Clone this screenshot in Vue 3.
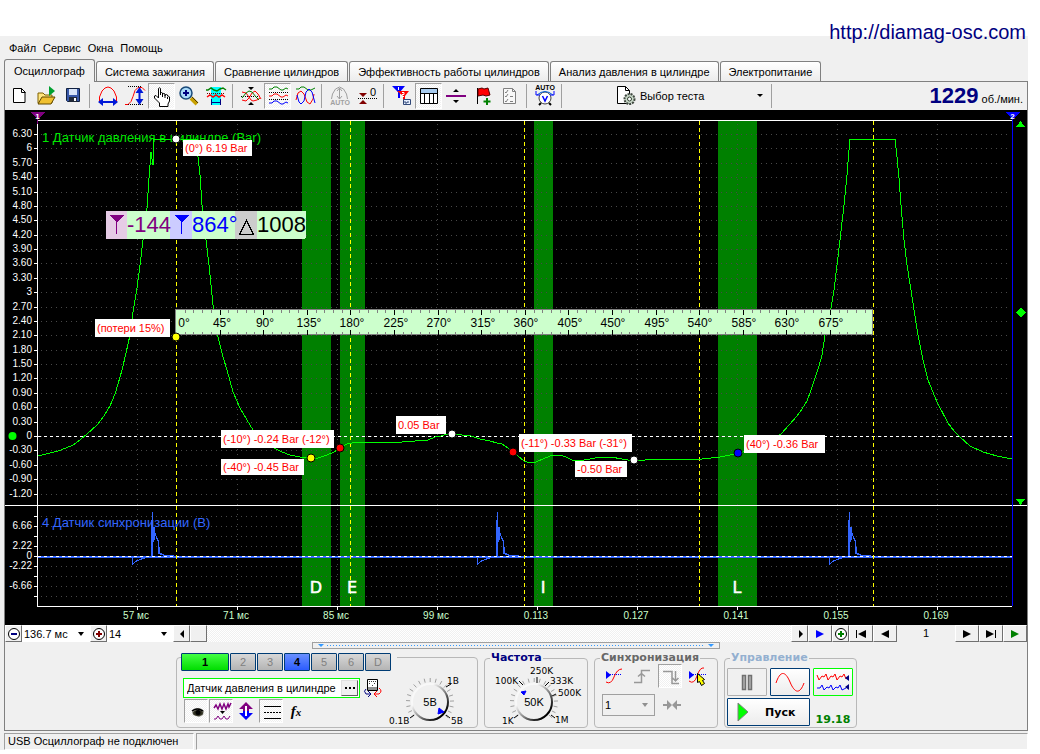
<script setup>
import { ref } from 'vue'

const menus = ['Файл', 'Сервис', 'Окна', 'Помощь']
const tabs = [
  'Осциллограф',
  'Система зажигания',
  'Сравнение цилиндров',
  'Эффективность работы цилиндров',
  'Анализ давления в цилиндре',
  'Электропитание'
]
const activeTab = ref(0)
const channels = ['1', '2', '3', '4', '5', '6', 'D']
const sensor = ref('Датчик давления в цилиндре')

const pressureTicks = Array.from({ length: 26 }, (_, i) => {
  const v = (63 - 3 * i) / 10
  return { y: Math.round(134 + i * 14.38), text: Number.isInteger(v) ? String(v) : v.toFixed(2) }
})
const syncTicks = [516, 526, 536, 546, 556, 566, 576, 586, 596]
const syncLabels = [
  { y: 526, text: '6.66' },
  { y: 546, text: '2.22' },
  { y: 556, text: '0' },
  { y: 566, text: '-2.22' },
  { y: 586, text: '-6.66' }
]
const times = ['57 мс', '71 мс', '85 мс', '99 мс', '0.113', '0.127', '0.141', '0.155', '0.169'].map(
  (text, i) => ({ x: 137 + i * 100, text })
)
const bands = [
  { x: 302, w: 29, letter: 'D', lx: 316 },
  { x: 340, w: 25, letter: 'E', lx: 352 },
  { x: 534, w: 19, letter: 'I', lx: 543 },
  { x: 718, w: 39, letter: 'L', lx: 737 }
]
const strokes = [176, 350, 524, 699, 873]
const rulerTicks = Array.from({ length: 79 }, (_, i) => ({
  x: Math.round(176 + (i + 1) * 8.72),
  major: (i + 1) % 5 === 0
}))
const rulerLabels = Array.from({ length: 16 }, (_, i) => ({
  x: Math.round((i ? 178 : 184) + i * 43.5),
  text: i * 45 + '°'
}))
const pulses = [0, 345, 697]
const notes = [
  { x: 183, y: 140, w: 69, h: 16, text: '(0°) 6.19 Bar' },
  { x: 95, y: 319, w: 75, h: 18, text: '(потери 15%)' },
  { x: 221, y: 430, w: 113, h: 18, text: '(-10°) -0.24 Bar (-12°)' },
  { x: 221, y: 459, w: 83, h: 16, text: '(-40°) -0.45 Bar' },
  { x: 396, y: 416, w: 50, h: 18, text: '0.05 Bar' },
  { x: 519, y: 434, w: 113, h: 18, text: '(-11°) -0.33 Bar (-31°)' },
  { x: 575, y: 461, w: 52, h: 16, text: '-0.50 Bar' },
  { x: 744, y: 435, w: 81, h: 18, text: '(40°) -0.36 Bar' }
]
const dots = [
  { x: 176, y: 139, c: '#fff' },
  { x: 176, y: 337, c: '#ff0' },
  { x: 311, y: 458, c: '#ff0' },
  { x: 340, y: 448, c: '#f00' },
  { x: 452, y: 434, c: '#fff' },
  { x: 513, y: 452, c: '#f00' },
  { x: 634, y: 460, c: '#fff' },
  { x: 738, y: 453, c: '#00f' }
]
const pressure =
  '38,456 50,453 58,451 66,448 73,445 80,440 87,434 97,425 104,416 110,406 115,394 118,384 122,370 126,353 130,335 133,312 137,288 140,265 143,240 147,208 149,178 151,152 153,165 153,139 197,139 198,157 200,175 202,205 206,240 209,265 213,305 218,337 223,357 227,370 233,392 240,408 247,420 253,430 262,438 274,448 282,452 290,455 300,457 311,458 318,458 327,455 334,452 340,448 347,444 352,443 360,442 402,442 415,441 428,440 435,437 441,436 447,434 452,434 462,435 471,436 480,439 490,441 497,443 502,444 508,448 513,452 518,456 524,461 530,463 536,462 545,458 553,455 560,455 566,457 572,460 578,461 584,460 590,459 600,457 611,457 622,459 634,461 645,460 655,459 672,459 690,460 702,459 720,457 730,455 738,453 752,450 768,443 781,434 789,425 797,416 802,409 807,401 811,390 815,378 819,366 822,355 825,335 831,308 834,290 837,265 840,240 844,205 847,175 849,150 850,139 895,139 897,157 899,178 901,205 904,240 907,265 911,290 914,310 918,335 923,360 928,380 937,402 948,423 954,431 960,437 970,446 983,452 997,456 1012,459'

const knobTicks = Array.from({ length: 19 }, (_, i) => {
  const a = ((-220 + i * 14.5) * Math.PI) / 180
  return {
    x1: 45 + Math.cos(a) * 20,
    y1: 46 + Math.sin(a) * 20,
    x2: 45 + Math.cos(a) * 24,
    y2: 46 + Math.sin(a) * 24
  }
})
</script>

<template>
  <div class="page">
    <header class="site"><a href="http://diamag-osc.com">http://diamag-osc.com</a></header>
    <main class="app">
      <nav class="menu">
        <button v-for="m in menus" :key="m" type="button">{{ m }}</button>
      </nav>
      <div class="tabs" role="tablist">
        <button
          v-for="(t, i) in tabs"
          :key="t"
          type="button"
          role="tab"
          :aria-selected="i === activeTab"
          :class="{ active: i === activeTab }"
          @click="activeTab = i"
        >{{ t }}</button>
      </div>

      <section class="body">
        <div class="toolbar">
          <button type="button" class="tool" aria-label="Новый">
            <svg viewBox="0 0 24 24"><path d="M6.500 4.500h8l3.500 3.500v10.500H6.500z" fill="#fff" stroke="#000" /><path d="M14.500 4.500v4h4" fill="none" stroke="#000" /></svg>
          </button>
          <button type="button" class="tool" aria-label="Открыть">
            <svg viewBox="0 0 24 24"><path d="M4 19V9h5l2 2h7v8z" fill="#ffe680" stroke="#806000" /><path d="M4 20l4-7h13l-4 7z" fill="#f0c030" stroke="#604800" /><path d="M15 2v10l6-5z" fill="#00a030" /></svg>
          </button>
          <button type="button" class="tool" aria-label="Сохранить">
            <svg viewBox="0 0 24 24"><path d="M5.500 4.500h13v13h-12l-1-1z" fill="#3858a8" stroke="#102040" /><path d="M8 5h8v6H8z" fill="#d8e4f8" /><path d="M8 13h8v5H8z" fill="#202838" /><path d="M13 14h2v3h-2z" fill="#fff" /></svg>
          </button>
          <i class="sep"></i>
          <button type="button" class="tool" aria-label="Период">
            <svg viewBox="0 0 24 24"><path d="M3.500 18V13L6 7l3-3 3-1 3 1 3 3 2.500 6v5" fill="none" stroke="#f00" /><path d="M6 18h12" stroke="#0018d8" stroke-width="2" /><path d="M2 18l5-4v8zM22 18l-5-4v8z" fill="#0018d8" /></svg>
          </button>
          <button type="button" class="tool" aria-label="Амплитуда">
            <svg viewBox="0 0 24 24"><path d="M5 2.500h13M5 20.500h15" stroke="#000" stroke-dasharray="1 1" /><path d="M2 20.500h3l3-3 2-5 2-6 3-3h4l3 3" fill="none" stroke="#f00" /><path d="M16.500 7v11" stroke="#0018d8" stroke-width="2" /><path d="M16.500 3l-4 6h8zM16.500 21l-4-6h8z" fill="#0018d8" /></svg>
          </button>
          <button type="button" class="tool pressed" aria-label="Рука">
            <svg viewBox="0 0 24 24"><path d="M8.500 14V4.500q1-1.500 2 0V11v-2q1-1 2 0v2-1q1.500-1 2.500 0v2-1q1.500-1 2.500 0v1q1.500 0 2 1v4l-1.500 3v2.500H9.500V19L4.500 14v-2l1.500-.5z" fill="#fff" stroke="#000" /><path d="M12.500 11v2M15 12v2M17.500 13v2" stroke="#000" /></svg>
          </button>
          <button type="button" class="tool" aria-label="Масштаб">
            <svg viewBox="0 0 24 24"><path d="M14 14l6 6" stroke="#c8a000" stroke-width="4" /><path d="M15 13l6 6" stroke="#503800" /><circle cx="9" cy="9" r="6" fill="#a8d8f8" stroke="#184878" stroke-width="1.500" /><path d="M6 9h6M9 6v6" stroke="#000080" stroke-width="2" /></svg>
          </button>
          <button type="button" class="tool" aria-label="Участок">
            <svg viewBox="0 0 24 24"><path d="M7 3h10v18H7z" fill="#0ff" /><path d="M2 6h2l3-2 3 2 3 1 3-2 3-1 3 2" fill="none" stroke="#008000" stroke-width="1.500" /><path d="M3 9.500h18" stroke="#600" stroke-dasharray="1 1" /><path d="M3 13l3-2 3 2 3-2 3 2 3-2 3 2" fill="none" stroke="#f00" stroke-width="1.500" /><path d="M7.500 15v6M16.500 15v6M8 18.500h9" stroke="#000080" /></svg>
          </button>
          <i class="sep"></i>
          <button type="button" class="tool" aria-label="Сжать">
            <svg viewBox="0 0 24 24"><path d="M2 12.500h20" stroke="#000" stroke-dasharray="1 1" /><path d="M3 8l4 1 3 4 2 3 2 1 4-1 3-2" fill="none" stroke="#f00" /><path d="M3 16l4 1 3-3 3-5 3-2 3 3 3 5" fill="none" stroke="#f00" /><path d="M3 14l4-5 3-2 3 1 4 5 3 3" fill="none" stroke="#008000" /><path d="M9 3h6l-3 3zM9 21h6l-3-3z" fill="#000" /></svg>
          </button>
          <button type="button" class="tool pressed" aria-label="Раздельно">
            <svg viewBox="0 0 24 24"><path d="M3 5h3l2-2h3l4 3h2l3-2 2 1" fill="none" stroke="#008000" /><path d="M3 12h3l2-2h3l4 3h2l3-2 2 1" fill="none" stroke="#f00" /><path d="M3 19h3l2-2h3l4 3h2l3-2 2 1" fill="none" stroke="#00f" /><path d="M3 8.500h19M3 15.500h19" stroke="#000" stroke-dasharray="1 1" /></svg>
          </button>
          <button type="button" class="tool" aria-label="Вместе">
            <svg viewBox="0 0 24 24"><path d="M3 5h3l2-2h3l4 3h3l4-2" fill="none" stroke="#008000" /><path d="M3 16l2-7 3-2 3 3 3 8 3 2 3-5 1-5" fill="none" stroke="#f00" /><path d="M4 11l2 7 2 2 3-3 2-9 3-3 3 3 3 11" fill="none" stroke="#00f" /></svg>
          </button>
          <i class="sep"></i>
          <button type="button" class="tool" aria-label="Авто" disabled>
            <svg viewBox="0 0 24 24"><path d="M3.500 15l1-5 3-5 4-2 4 2 3 5 1 5M11.500 4v11M9 7l2.500-3L14 7M9 12l2.500 3 2.500-3" fill="none" stroke="#a0a0a0" /><text x="12" y="21" class="tiny grey">AUTO</text></svg>
          </button>
          <button type="button" class="tool" aria-label="Ноль">
            <svg viewBox="0 0 24 24"><path d="M3 14.500h19" stroke="#000" stroke-dasharray="1 1" /><path d="M4 9h8l-4 4zM4 20h8l-4-4z" fill="#800000" /><text x="18" y="12" class="zero">0</text></svg>
          </button>
          <i class="sep"></i>
          <button type="button" class="tool" aria-label="Фильтр">
            <svg viewBox="0 0 24 24"><path d="M2 2h13l-5 6v6H8V8z" fill="#00f" /><path d="M7 7h12l-4 5v6h-2v-6z" fill="#f00" /><path d="M8.500 3v3M12 8.500h2v2h-2v2h2" stroke="#fff" fill="none" /><path d="M13.500 15.500h7v5h-7z" fill="#e8f0ff" stroke="#304878" /><path d="M15 17v2h2v-1h2" stroke="#304878" fill="none" /></svg>
          </button>
          <button type="button" class="tool pressed" aria-label="Таблица">
            <svg viewBox="0 0 24 24"><path d="M3.500 4.500h17v15h-17z" fill="#fff" stroke="#000" /><path d="M4 5h16v4H4z" fill="#a8ccf0" /><path d="M3 9.500h18M7.500 9v10M12.500 9v10M16.500 9v10" stroke="#000" /></svg>
          </button>
          <button type="button" class="tool" aria-label="Линейка">
            <svg viewBox="0 0 24 24"><path d="M2 12h20" stroke="#800080" stroke-width="2" /><path d="M12 5l3 3H9zM12 19l3-3H9z" fill="#000" /></svg>
          </button>
          <button type="button" class="tool" aria-label="Метка">
            <svg viewBox="0 0 24 24"><path d="M6.500 4v16" stroke="#000" /><path d="M7 5l4-1 2 1 4-1 2 7-4 1-3-1-5 1z" fill="#f00" stroke="#500" /><path d="M16 14v7M12.500 17.500h7" stroke="#008000" stroke-width="2" /></svg>
          </button>
          <button type="button" class="tool" aria-label="Отчёт" disabled>
            <svg viewBox="0 0 24 24"><path d="M5.500 4.500h9l3 3v12h-12z" fill="#f8f8f8" stroke="#808080" /><path d="M14.500 4.500v3h3M7 8l1 1 2-3M7 12l1 1 2-3M7 17l1 1 2-3" fill="none" stroke="#808080" /><path d="M12 12.500h3M12 17.500h3" stroke="#808080" /></svg>
          </button>
          <i class="sep"></i>
          <button type="button" class="tool" aria-label="Автонастройка">
            <svg viewBox="0 0 24 24"><text x="12" y="6" class="tiny">AUTO</text><circle cx="12" cy="14" r="6" fill="#fff" stroke="#404040" /><path d="M9.500 12l2.500 5 2.500-5" fill="none" stroke="#00f" stroke-width="1.500" /><path d="M4 11q8-7 16 0" fill="none" stroke="#0060e0" /><path d="M3 7v4h4M21 7v4h-4" fill="none" stroke="#00f" /><path d="M8 19l-2 2M16 19l2 2" stroke="#000" stroke-width="2" /></svg>
          </button>
          <i class="sep"></i>
          <label class="test">
            <svg viewBox="0 0 24 24"><path d="M3.500 2.500h8l4 4v13h-12z" fill="#fff" stroke="#000" /><path d="M11.500 2.500v4h4" fill="none" stroke="#000" /><circle cx="15.500" cy="15" r="5" fill="#c8d8c8" stroke="#404840" stroke-width="2" stroke-dasharray="2 1" /><circle cx="15.500" cy="15" r="2" fill="#fff" stroke="#304030" /></svg>
            <select aria-label="Выбор теста"><option>Выбор теста</option></select>
            <svg class="caret" viewBox="0 0 6 4"><path d="M0 0h6L3 3z" /></svg>
          </label>
          <i class="sep"></i>
          <output class="rpm"><b>1229</b> об./мин.</output>
        </div>

        <svg class="plot" viewBox="5 110 1022 515" role="img" aria-label="Осциллограмма">
          <rect x="5" y="110" width="1022" height="515" />
          <rect v-for="b in bands" :key="b.x" :x="b.x" y="121" :width="b.w" height="485" fill="#008000" />
          <g class="grid">
            <path v-for="t in pressureTicks" :key="t.y" :d="`M41 ${t.y + 0.5}H1011`" />
            <path v-for="y in syncTicks" :key="y" :d="`M41 ${y + 0.5}H1011`" />
            <path v-for="t in times" :key="t.x" :d="`M${t.x + 0.5} 124V605`" />
          </g>
          <text x="42" y="142" class="title" fill="#00e800">1 Датчик давления в цилиндре (Bar)</text>
          <text x="42" y="527" class="title" fill="#36f">4 Датчик синхронизации (В)</text>
          <g class="axis">
            <path d="M37 120.500H1012M5 505.500H1027M37 606.500H1012M37.500 120V607" />
            <path v-for="t in pressureTicks" :key="t.y" :d="`M34 ${t.y + 0.5}h3`" />
            <path v-for="y in syncTicks" :key="y" :d="`M34 ${y + 0.5}h3`" />
            <path v-for="t in times" :key="t.x" :d="`M${t.x + 0.5} 607v3`" />
          </g>
          <g class="scale">
            <text v-for="t in pressureTicks" :key="t.y" x="32" :y="t.y + 3">{{ t.text }}</text>
            <text v-for="t in syncLabels" :key="t.y" x="32" :y="t.y + 3">{{ t.text }}</text>
          </g>
          <g class="time">
            <text v-for="t in times" :key="t.x" :x="t.x - 1" y="619">{{ t.text }}</text>
          </g>
          <g class="pulse">
            <path d="M38 557H1012" class="double" />
            <template v-for="p in pulses" :key="p">
              <path :d="`M${p + 132.5} 557v7l4-3 5-2 6-2h4V528l1-16v46l1-30 2 7 3 7v11l4 2 10 1`" />
              <path :d="`M${p + 152} 557V534M${p + 154} 540V527`" class="double" />
              <path :d="`M${p + 153.5} 527l2 8 3 6 1 12 4 2 10 1`" />
            </template>
          </g>
          <path d="M38 436.500H1012M38 556.500H1012" class="zeroline" />
          <path v-for="s in strokes" :key="s" :d="`M${s + 0.5} 121V606`" class="stroke" />
          <polyline :points="pressure" class="pressure" />
          <g class="letters">
            <text v-for="b in bands" :key="b.letter" :x="b.lx" y="593">{{ b.letter }}</text>
          </g>

          <g class="ruler">
            <rect x="175.500" y="309.500" width="697" height="25" />
            <path v-for="t in rulerTicks" :key="t.x" :class="{ major: t.major }" :d="t.major ? `M${t.x + 0.5} 310v5m0 15v5` : `M${t.x + 0.5} 310v3m0 19v3`" />
            <text v-for="t in rulerLabels" :key="t.x" :x="t.x" y="327">{{ t.text }}</text>
          </g>

          <g class="measure">
            <rect x="106" y="211" width="200" height="28" rx="2" fill="#cfc" />
            <path d="M106 211h21v28h-21z" fill="#e6cce6" />
            <path d="M170 211h22v28h-22z" fill="#ccf" />
            <path d="M235 211h22v28h-22z" fill="#ccc" />
            <path d="M109 215h15l-7 7v12h-1v-12z" fill="#800080" />
            <path d="M174 215h15l-7 7v12h-1v-12z" fill="#00f" />
            <path d="M246.500 220.500l7 14h-14z" fill="none" stroke="#000" />
            <text x="127" y="232" fill="#800080">-144</text>
            <text x="192" y="232" fill="#00f">864°</text>
            <text x="257" y="232">1008</text>
          </g>

          <g v-for="n in notes" :key="n.x + '-' + n.y" class="note">
            <rect :x="n.x" :y="n.y" :width="n.w" :height="n.h" />
            <text :x="n.x + 2" :y="n.y + n.h / 2 + 4">{{ n.text }}</text>
          </g>
          <circle v-for="d in dots" :key="d.x + '-' + d.y" :cx="d.x" :cy="d.y" r="4" :fill="d.c" stroke="#000" />
          <circle cx="12.500" cy="436" r="4" fill="#0f0" />

          <path d="M30 112h15l-7 7v5h-1v-5z" fill="#800080" />
          <text x="37.500" y="119" class="mark">1</text>
          <path d="M1012 112h1v494h-1z" fill="#00f" />
          <path d="M1005 112h15l-7 7h-1z" fill="#00f" />
          <text x="1012.500" y="119" class="mark">2</text>
          <path d="M1016 127h9l-4.500-6zM1016 499h9l-4.500 6zM1020.500 307.500l5 5-5 5-5-5z" fill="#0f0" />
        </svg>

        <div class="transport">
          <button type="button" class="key" aria-label="Сжать время"><svg viewBox="0 0 14 14"><circle cx="7" cy="7" r="5.500" fill="#fff" stroke="#000" /><path d="M4 7h6" stroke="#000080" stroke-width="2" /></svg></button>
          <label class="drop wide"><select aria-label="Развёртка"><option>136.7 мс</option></select><svg class="caret" viewBox="0 0 6 4"><path d="M0 0h6L3 4z" /></svg></label>
          <button type="button" class="key" aria-label="Растянуть время"><svg viewBox="0 0 14 14"><circle cx="7" cy="7" r="5.500" fill="#fff" stroke="#000" /><path d="M4 7h6M7 4v6" stroke="#800000" stroke-width="2" /></svg></button>
          <label class="drop"><select aria-label="Масштаб"><option>14</option></select><svg class="caret" viewBox="0 0 6 4"><path d="M0 0h6L3 4z" /></svg></label>
          <button type="button" class="key" aria-label="Влево"><svg viewBox="0 0 14 14"><path d="M9 3v8L5 7z" /></svg></button>
          <div class="track"><button type="button" class="key" aria-label="Ползунок"></button></div>
          <button type="button" class="key" aria-label="Вправо"><svg viewBox="0 0 14 14"><path d="M6 3v8l4-4z" /></svg></button>
          <button type="button" class="key long" aria-label="Воспроизвести"><svg viewBox="0 0 14 14"><path d="M3 3v8l8-4z" fill="#00f" /></svg></button>
          <button type="button" class="key" aria-label="Добавить"><svg viewBox="0 0 14 14"><circle cx="7" cy="7" r="5.500" fill="#fff" stroke="#000" /><path d="M4 7h6M7 4v6" stroke="#008000" stroke-width="2" /></svg></button>
          <button type="button" class="key long" aria-label="В начало"><svg viewBox="0 0 14 14"><path d="M2 3h1v8H2zM12 3v8L4 7z" /></svg></button>
          <button type="button" class="key long" aria-label="Назад"><svg viewBox="0 0 14 14"><path d="M11 3v8L3 7z" /></svg></button>
          <output class="frame">1</output>
          <button type="button" class="key long" aria-label="Вперёд"><svg viewBox="0 0 14 14"><path d="M3 3v8l8-4z" /></svg></button>
          <button type="button" class="key long" aria-label="В конец"><svg viewBox="0 0 14 14"><path d="M11 3h1v8h-1zM2 3v8l8-4z" /></svg></button>
          <button type="button" class="key long" aria-label="Старт"><svg viewBox="0 0 14 14"><path d="M3 3v8l8-4z" fill="#008000" /></svg></button>
        </div>

        <div class="splitter"><i></i></div>

        <div class="panel">
          <section class="group channel">
            <div class="settings">
              <div class="channels">
                <button v-for="c in channels" :key="c" type="button" :class="'ch' + c">{{ c }}</button>
              </div>
              <div class="sensor">
                <div class="box">
                  <input v-model="sensor" type="text" aria-label="Датчик" />
                  <button type="button" aria-label="Выбрать датчик"><svg viewBox="0 0 10 2"><path d="M0 0h2v2H0zM4 0h2v2H4zM8 0h2v2H8z" /></svg></button>
                </div>
                <button type="button" class="flat" aria-label="Переключить датчик">
                  <svg viewBox="0 0 24 24"><path d="M7.500 3.500h10v11h-10z" fill="#fff" stroke="#000" /><path d="M8 11h9v3H8z" fill="#909090" /><path d="M9 5.500h8M9 7.500h2M14 7.500h2M12 9.500h1" stroke="#404040" stroke-dasharray="1 1" /><path d="M6 13q-3 2 0 5h4M8 15l3 3-3 3" fill="none" stroke="#000080" /><path d="M19 12q4 3 0 6h-5M17 15l-3 3 3 3" fill="none" stroke="#f00" /></svg>
                </button>
              </div>
              <div class="modes">
                <button type="button" class="tool pressed" aria-label="Показать">
                  <svg viewBox="0 0 24 24"><path d="M7 12q2-4 7-4 4 1 5 3l-1 4-4 2-6-2z" fill="#909088" /><ellipse cx="13" cy="13" rx="5" ry="3" fill="#303020" /><circle cx="13" cy="12.500" r="2.500" /><path d="M7 11q5-4 11 0" fill="none" stroke="#000" stroke-width="1.500" /></svg>
                </button>
                <button type="button" class="tool pressed" aria-label="Сглаживание">
                  <svg viewBox="0 0 24 24"><path d="M4 8l2-3 2 4 2-5 2 5 2-5 2 5 2-5 1 3 2-4" fill="none" stroke="#800080" stroke-width="1.500" /><path d="M4 19h2l2-3 2 3h2l2-3 2 3h2l2-3" fill="none" stroke="#800080" /><path d="M10 11h5l-2.500 3z" /></svg>
                </button>
                <button type="button" class="tool" aria-label="Инверсия">
                  <svg viewBox="0 0 24 24"><path d="M12 3l7 7h-4v3H9v-3H5z" fill="#800080" /><path d="M12 21l7-7h-4v-2H9v2H5z" fill="#00f" /><path d="M12 7v10" stroke="#fff" stroke-width="2" /></svg>
                </button>
                <button type="button" class="tool pressed" aria-label="Линии">
                  <svg viewBox="0 0 24 24"><path d="M4 6.500h17M4 18.500h17" stroke="#000" /><path d="M4 12.500h17" stroke="#000" stroke-dasharray="2 1" /></svg>
                </button>
                <button type="button" class="tool fx" aria-label="Функция">f<small>x</small></button>
              </div>
            </div>
            <svg class="knob" viewBox="0 0 90 72" role="img" aria-label="Чувствительность">
              <defs>
                <linearGradient id="rim" x1="0" y1="0" x2="1" y2="1">
                  <stop offset="0.300" stop-color="#f8f8f8" />
                  <stop offset="0.550" stop-color="#888" />
                  <stop offset="0.850" stop-color="#000" />
                </linearGradient>
              </defs>
              <path v-for="(t, i) in knobTicks" :key="i" :d="`M${t.x1} ${t.y1}L${t.x2} ${t.y2}`" stroke="#a0a0a0" />
              <path d="M61 31l5-3M29 59l-4 3M61 59l4 3" stroke="#000" />
              <circle cx="45" cy="46" r="18" fill="#f0f0f0" stroke="url(#rim)" stroke-width="2" />
              <path d="M54 52l5 4-6 2z" fill="#00f" stroke="#00f" />
              <text x="45" y="50" text-anchor="middle" class="dial">5В</text>
              <text x="62" y="28">1В</text><text x="4" y="68">0.1В</text><text x="66" y="68">5В</text>
            </svg>
          </section>

          <fieldset class="group freq">
            <legend>Частота</legend>
            <svg class="knob" viewBox="0 0 102 72" role="img" aria-label="Частота 50K">
              <g transform="translate(4 0)">
                <path v-for="(t, i) in knobTicks" :key="i" :d="`M${t.x1} ${t.y1}L${t.x2} ${t.y2}`" stroke="#a0a0a0" />
                <circle cx="45" cy="46" r="18" fill="#f0f0f0" stroke="url(#rim)" stroke-width="2" />
                <path d="M32 36l5-1-2 4z" fill="#00f" stroke="#00f" />
                <path d="M48 21v6M30 25l4 4M56 30l4-4M63 40l4-2M29 59l-4 3M62 59l4 3" stroke="#000" />
                <text x="45" y="50" text-anchor="middle" class="dial">50K</text>
              </g>
              <text x="45" y="18">250K</text><text x="10" y="28">100K</text><text x="65" y="28">333K</text><text x="73" y="40">500K</text><text x="17" y="68">1K</text><text x="70" y="67">1M</text>
            </svg>
          </fieldset>

          <fieldset class="group sync">
            <legend>Синхронизация</legend>
            <div class="row">
              <button type="button" class="tool" aria-label="Уровень"><svg viewBox="0 0 24 24"><path d="M4 10.500h16" stroke="#00f" stroke-dasharray="1 1" /><path d="M4 18q5 3 8-5t8-8" fill="none" stroke="#f00" /><path d="M4 7v8l5-4z" fill="#00f" /></svg></button>
              <button type="button" class="tool" aria-label="Фронт"><svg viewBox="0 0 24 24"><path d="M4 18.500h7.500v-12H20M8 12.500l3.500-3 3.500 3" fill="none" stroke="#989898" stroke-width="1.500" /></svg></button>
              <button type="button" class="tool pressed" aria-label="Спад"><svg viewBox="0 0 24 24"><path d="M4 6.500h9v12h7M16.500 6v10M13.500 13l3 3 3-3" fill="none" stroke="#989898" stroke-width="1.500" /></svg></button>
              <button type="button" class="tool" aria-label="Указать"><svg viewBox="0 0 24 24"><path d="M3 10.500h18" stroke="#00f" stroke-dasharray="1 1" /><path d="M3 17q5 4 8-5t7-8" fill="none" stroke="#f00" /><path d="M3 7v8l5-4z" fill="#00f" /><path d="M11.500 9.500l7 6-2 1 2 3-3 2-2-4-2 1z" fill="#ff0" stroke="#000" /></svg></button>
            </div>
            <div class="row second">
              <label class="chan"><select aria-label="Канал синхронизации"><option>1</option></select><svg class="caret" viewBox="0 0 6 4"><path d="M0 0h6L3 4z" fill="#909090" /></svg></label>
              <svg class="meet" viewBox="0 0 18 12"><path d="M0 5h4V1l5 5-5 5V7H0zM18 5h-4V1L9 6l5 5V7h4z" fill="#989898" /></svg>
            </div>
          </fieldset>

          <fieldset class="group control">
            <legend>Управление</legend>
            <div class="grid-buttons">
              <button type="button" class="off" aria-label="Пауза"><svg viewBox="0 0 36 24"><path d="M13.500 5.500h3v14h-3zM19.500 5.500h3v14h-3z" fill="#b0b0b0" stroke="#707070" stroke-width="1.500" /></svg></button>
              <button type="button" aria-label="Один канал"><svg viewBox="0 0 36 24"><path d="M4 13C8 1 13 0 18 12s10 12 14 1" fill="none" stroke="#f00" /></svg></button>
              <button type="button" class="on" aria-label="Все каналы"><svg viewBox="0 0 36 24"><path d="M2 5l2 5 3-4 2 1 2-3 2 6 3-4 2 1 2-3 2 6 3-4 2 1 2-3 2 5" fill="none" stroke="#f00" /><path d="M2 18h3l2-3 2 5 3-3 2 1 2-3 2 5 3-3 2 1 2-3 2 5 4-2" fill="none" stroke="#00f" /><path d="M34 5v6l-4-3zM34 14v6l-4-3z" fill="#000080" /></svg></button>
              <button type="button" class="run"><svg viewBox="0 0 12 20"><path d="M1 1v18l10-9z" fill="#0f0" stroke="#808080" /></svg>Пуск</button>
              <output>19.18</output>
            </div>
          </fieldset>
        </div>
      </section>

      <footer class="status">
        <span>USB Осциллограф не подключен</span>
        <span></span>
      </footer>
    </main>
  </div>
</template>

<style>
body {
  margin: 0;
  background: #fff;
}
</style>

<style scoped>
.page {
  padding-right: 12px;
  font: 11px "Liberation Sans", Arial, sans-serif;
  color: #000;
}
.page * {
  box-sizing: border-box;
}
button, select, input {
  font: inherit;
  color: inherit;
  margin: 0;
  padding: 0;
  border: 0;
  background: none;
  border-radius: 0;
  appearance: none;
}
svg {
  display: block;
}
.site {
  display: flex;
  justify-content: flex-end;
  height: 36px;
  padding: 20px 2px 0 0;
}
.site a {
  position: relative;
  z-index: 1;
  height: 24px;
  font-size: 20px;
  line-height: 24px;
  color: #000080;
  text-decoration: none;
}
.app {
  background: #f0f0f0;
}
.menu {
  display: flex;
  gap: 7px;
  height: 23px;
  padding-left: 9px;
}
.tabs {
  display: flex;
  align-items: flex-end;
  gap: 1px;
  height: 22px;
  padding-left: 4px;
}
.tabs button {
  height: 20px;
  padding: 0 8px;
  border: 1px solid #808080;
  border-bottom: 0;
  border-radius: 3px 3px 0 0;
  background: linear-gradient(#fff, #ececec);
  white-space: nowrap;
}
.tabs .active {
  position: relative;
  height: 23px;
  margin-bottom: -1px;
  padding: 0 9px;
  background: #f0f0f0;
}
.body {
  margin-left: 4px;
  border: 1px solid #808080;
}
.toolbar {
  display: flex;
  align-items: center;
  height: 28px;
}
.tool {
  display: grid;
  place-items: center;
  flex: none;
  width: 27px;
  height: 26px;
}
.tool svg {
  width: 24px;
  height: 24px;
}
.pressed {
  border: 1px solid #fff;
  border-top-color: #a0a0a0;
  border-left-color: #a0a0a0;
  background: repeating-conic-gradient(#fff 0 25%, #f0f0f0 0 50%) 0 0 / 2px 2px;
}
.sep {
  flex: none;
  width: 8px;
  height: 24px;
  background: linear-gradient(#a0a0a0, #a0a0a0) 3px 0 / 1px 100% no-repeat;
}
.tiny {
  font: bold 7px "Liberation Sans", sans-serif;
  text-anchor: middle;
}
.grey {
  fill: #a0a0a0;
}
.zero {
  font: 11px "Liberation Sans", sans-serif;
  text-anchor: middle;
}
.test {
  display: flex;
  align-items: center;
  width: 202px;
  padding-left: 48px;
}
.test svg {
  width: 24px;
  height: 24px;
}
.test select {
  flex: 1;
  height: 24px;
  padding-left: 2px;
}
.test .caret {
  margin-right: 5px;
}
svg.caret {
  flex: none;
  width: 6px;
  height: 4px;
  pointer-events: none;
}
.rpm {
  margin-left: auto;
  padding-right: 4px;
  white-space: nowrap;
}
.rpm b {
  font-size: 22px;
  line-height: 26px;
  color: #000080;
}
.plot {
  width: 100%;
  height: auto;
  font: 10px "Liberation Sans", Arial, sans-serif;
}
.plot path, .plot polyline, .plot rect {
  shape-rendering: crispEdges;
}
.grid path {
  stroke: #484848;
  stroke-dasharray: 1 4;
}
.title {
  font-size: 13px;
}
.axis path {
  stroke: #fff;
}
.scale {
  fill: #fff;
  text-anchor: end;
}
.time {
  fill: #cfc;
  text-anchor: middle;
}
.pulse path {
  fill: none;
  stroke: #36f;
}
.pulse .double {
  stroke-width: 2;
}
.zeroline {
  stroke: #fff;
  stroke-dasharray: 3 3;
}
.stroke {
  stroke: #ff0;
  stroke-dasharray: 4 3;
}
.pressure {
  fill: none;
  stroke: #0f0;
}
.letters {
  fill: #fff;
  font: 16px "DejaVu Sans", Verdana, sans-serif;
  text-anchor: middle;
  stroke: #fff;
  stroke-width: 0.5;
}
.ruler rect {
  fill: #cfc;
  stroke: #808080;
}
.ruler path {
  stroke: #808080;
}
.ruler .major {
  stroke: #000;
}
.ruler text {
  font-size: 12px;
  text-anchor: middle;
}
.measure text {
  font-size: 22px;
}
.note rect {
  fill: #fff;
}
.note text {
  font-size: 11px;
  fill: #f00;
}
.mark {
  font: bold 8px "Liberation Sans", sans-serif;
  fill: #fff;
  text-anchor: middle;
}
.transport {
  display: flex;
  height: 17px;
}
.key {
  display: grid;
  place-items: center;
  flex: none;
  width: 17px;
  height: 17px;
  border: 1px solid #fff;
  border-right-color: #707070;
  border-bottom-color: #707070;
  background: #f0f0f0;
}
.key svg {
  width: 14px;
  height: 14px;
}
.key.long {
  width: 24px;
}
.drop {
  display: flex;
  align-items: center;
  width: 66px;
  padding-right: 6px;
  background: #fff;
}
.drop.wide {
  width: 68px;
}
.drop select, .chan select {
  flex: 1;
  min-width: 0;
  height: 16px;
  padding-left: 2px;
}
.track {
  flex: 1;
  background: repeating-conic-gradient(#fff 0 25%, #f0f0f0 0 50%) 0 0 / 2px 2px;
}
.frame {
  width: 58px;
  text-align: center;
  line-height: 17px;
}
.splitter {
  display: flex;
  align-items: center;
  width: 40%;
  height: 7px;
  margin-left: 30%;
  padding: 0 5px;
  border: 1px solid #a0a0a0;
}
.splitter::before, .splitter::after {
  content: "";
  border: 3px solid transparent;
  border-top-color: #39f;
  border-bottom: 0;
}
.splitter i {
  flex: 1;
  height: 1px;
  margin: 0 3px;
  background: repeating-linear-gradient(90deg, #39f 0 1px, transparent 1px 3px);
}
.panel {
  display: flex;
  align-items: flex-start;
  padding: 3px 0 2px 171px;
}
.group {
  flex: none;
  height: 76px;
  min-width: 0;
  margin: 0 6px 0 0;
  padding: 0;
  border: 1px solid #b8b8b8;
  border-radius: 4px;
}
.group legend {
  height: 12px;
  margin-left: 5px;
  padding: 0 1px;
  font: bold 11px/12px "DejaVu Sans", Verdana, sans-serif;
}
.channel {
  display: flex;
  width: 302px;
  height: 71px;
  margin: 5px 6px 0 0;
}
.settings {
  width: 212px;
  margin-top: -5px;
  padding-left: 4px;
}
.channels {
  display: flex;
  gap: 1px;
  width: 216px;
  background: #f0f0f0;
}
.channels button {
  width: 26px;
  height: 18px;
  border: 1px solid #003c74;
  border-radius: 1px;
  background: linear-gradient(#d8d8d8, #b4b4b4);
  color: #808080;
}
.channels .ch1 {
  width: 48px;
  background: linear-gradient(#4f4, #0d0);
  color: #000;
  font-weight: bold;
}
.channels .ch4 {
  background: linear-gradient(#6a90ff, #2c5cff);
  color: #000;
  font-weight: bold;
}
.sensor {
  display: flex;
  align-items: center;
  height: 20px;
  margin: 7px 0 1px 2px;
}
.box {
  display: flex;
  width: 177px;
  height: 20px;
  padding: 1px;
  border: 1px solid #0f0;
  background: #fff;
}
.box input {
  flex: 1;
  min-width: 0;
  padding-left: 2px;
}
.box button {
  display: grid;
  place-items: center;
  width: 17px;
  border: 1px solid #e0e0e0;
  border-right-color: #606060;
  border-bottom-color: #606060;
  background: #f0f0f0;
}
.box svg {
  width: 10px;
  height: 2px;
}
.flat {
  flex: none;
  width: 24px;
  height: 24px;
}
.modes {
  display: flex;
  gap: 1px;
  margin-left: 3px;
}
.modes .tool, .sync .tool {
  width: 24px;
  height: 24px;
}
.fx {
  display: block;
  font: italic bold 15px "Liberation Serif", serif;
}
.fx small {
  font-size: 11px;
}
.knob {
  width: 90px;
  height: 72px;
  font: 9px "DejaVu Sans", Verdana, sans-serif;
}
.channel .knob {
  margin: -2px 0 0 -4px;
}
.knob .dial {
  font: 11px "Liberation Sans", sans-serif;
}
.freq {
  width: 104px;
  color: #000;
}
.freq legend {
  color: #000080;
}
.freq .knob {
  width: 102px;
  margin-top: -8px;
}
.sync {
  width: 124px;
}
.sync legend {
  color: #686868;
}
.row {
  display: flex;
  gap: 4px;
  padding-left: 7px;
}
.row.second {
  align-items: center;
  gap: 8px;
  margin-top: 6px;
}
.chan {
  display: flex;
  align-items: center;
  width: 53px;
  height: 22px;
  padding-right: 6px;
  border: 1px solid #a0a0a0;
}
.meet {
  width: 18px;
  height: 12px;
}
.control {
  width: 133px;
}
.control legend {
  color: #94b0d0;
}
.grid-buttons {
  display: grid;
  grid-template-columns: 40px 40px 40px;
  grid-template-rows: 28px 28px;
  gap: 2px 3px;
  margin: 4px 0 0 2px;
}
.grid-buttons button {
  display: flex;
  align-items: center;
  justify-content: center;
  border: 1px solid #003c74;
  border-radius: 1px;
  background: linear-gradient(#fff, #ececec);
}
.grid-buttons svg {
  width: 36px;
  height: 24px;
}
.grid-buttons .off {
  border-color: #b0b0b0;
  background: #f0f0f0;
}
.grid-buttons .on {
  border-color: #0f0;
}
.grid-buttons .run {
  grid-column: span 2;
  justify-content: flex-start;
  gap: 16px;
  padding-left: 9px;
  font: bold 11px "DejaVu Sans", Verdana, sans-serif;
}
.grid-buttons .run svg {
  width: 12px;
  height: 20px;
}
.grid-buttons output {
  align-self: end;
  text-align: center;
  font: bold 11px "DejaVu Sans", Verdana, sans-serif;
  color: #008000;
}
.status {
  display: flex;
  gap: 2px;
  padding: 2px 0 0 4px;
}
.status span {
  width: 190px;
  height: 17px;
  padding-left: 3px;
  border: 1px solid #fff;
  border-top-color: #a0a0a0;
  border-left-color: #a0a0a0;
  line-height: 15px;
  white-space: nowrap;
}
.status span:last-child {
  flex: 1;
}
</style>
